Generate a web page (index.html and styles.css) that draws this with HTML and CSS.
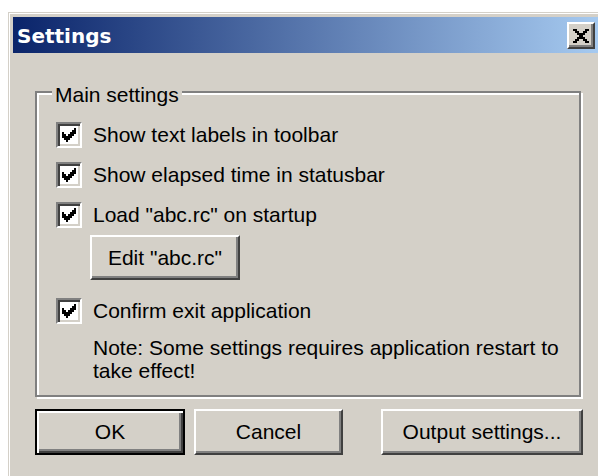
FILE: index.html
```html
<!DOCTYPE html>
<html>
<head>
<meta charset="utf-8">
<title>Settings</title>
<link rel="stylesheet" href="styles.css">
</head>
<body>
<div class="window">
  <div class="titlebar">
    <span class="title">Settings</span>
    <button class="close" aria-label="Close">
      <svg width="16" height="14" viewBox="0 0 8 7" shape-rendering="crispEdges">
        <path d="M0 0h2v1H0z M6 0h2v1H6z M1 1h2v1H1z M5 1h2v1H5z M2 2h4v1H2z M3 3h2v1H3z M2 4h4v1H2z M1 5h2v1H1z M5 5h2v1H5z M0 6h2v1H0z M6 6h2v1H6z" fill="#000"/>
      </svg>
    </button>
  </div>
  <div class="client">
    <div class="group">
      <span class="group-label">Main settings</span>
      <label class="check-row">
        <span class="box"><svg width="14" height="14" viewBox="0 0 7 7" shape-rendering="crispEdges"><path d="M0 2h1v3H0z M1 3h1v3H1z M2 4h1v3H2z M3 3h1v3H3z M4 2h1v3H4z M5 1h1v3H5z M6 0h1v3H6z" fill="#000"/></svg></span>
        <span class="label">Show text labels in toolbar</span>
      </label>
      <label class="check-row">
        <span class="box"><svg width="14" height="14" viewBox="0 0 7 7" shape-rendering="crispEdges"><path d="M0 2h1v3H0z M1 3h1v3H1z M2 4h1v3H2z M3 3h1v3H3z M4 2h1v3H4z M5 1h1v3H5z M6 0h1v3H6z" fill="#000"/></svg></span>
        <span class="label">Show elapsed time in statusbar</span>
      </label>
      <label class="check-row">
        <span class="box"><svg width="14" height="14" viewBox="0 0 7 7" shape-rendering="crispEdges"><path d="M0 2h1v3H0z M1 3h1v3H1z M2 4h1v3H2z M3 3h1v3H3z M4 2h1v3H4z M5 1h1v3H5z M6 0h1v3H6z" fill="#000"/></svg></span>
        <span class="label">Load "abc.rc" on startup</span>
      </label>
      <button class="btn btn-edit">Edit "abc.rc"</button>
      <label class="check-row row-confirm">
        <span class="box"><svg width="14" height="14" viewBox="0 0 7 7" shape-rendering="crispEdges"><path d="M0 2h1v3H0z M1 3h1v3H1z M2 4h1v3H2z M3 3h1v3H3z M4 2h1v3H4z M5 1h1v3H5z M6 0h1v3H6z" fill="#000"/></svg></span>
        <span class="label">Confirm exit application</span>
      </label>
      <p class="note">Note: Some settings requires application restart to<br>take effect!</p>
    </div>
    <div class="actions">
      <button class="btn btn-default btn-ok">OK</button>
      <button class="btn btn-cancel">Cancel</button>
      <button class="btn btn-output">Output settings...</button>
    </div>
  </div>
</div>
</body>
</html>
```
FILE: styles.css
```css
html, body {
  margin: 0;
  padding: 0;
  background: #fff;
  width: 598px;
  height: 476px;
  overflow: hidden;
}

.window {
  margin: 12px 0 0 8px;
  width: 596px;
  height: 480px;
  box-sizing: border-box;
  border: 1px solid #d4d0c8;
  box-shadow: inset 1px 1px 0 #fff;
  padding: 4px;
  background: #d4d0c8;
  font-family: "Liberation Sans", Arial, sans-serif;
  font-size: 21px;
  color: #000;
}

.titlebar {
  height: 36px;
  display: flex;
  align-items: center;
  justify-content: space-between;
  padding: 0 4px;
  background: linear-gradient(90deg, #0a246a 0%, #a6caf0 100%);
}

.title {
  font-family: "DejaVu Sans", Verdana, sans-serif;
  font-weight: bold;
  font-size: 20px;
  color: #fff;
  line-height: 36px;
  padding-top: 2px;
}

.close {
  width: 28px;
  height: 27px;
  margin-top: 1px;
  padding: 0;
  box-sizing: border-box;
  border: 2px solid;
  border-color: #fff #404040 #404040 #fff;
  box-shadow: inset -2px -2px 0 #808080;
  background: #d4d0c8;
  display: flex;
  align-items: center;
  justify-content: center;
}

.client {
  padding-left: 22px;
}

.group {
  position: relative;
  margin-top: 38px;
  width: 546px;
  box-sizing: border-box;
  border: 2px solid #808080;
  box-shadow: inset 2px 2px 0 #fff, 2px 2px 0 #fff;
  padding: 29px 0 13px 19px;
}

.group-label {
  position: absolute;
  top: -10px;
  left: 15px;
  padding: 0 3px;
  line-height: 24px;
  background: #d4d0c8;
}

.check-row {
  display: flex;
  align-items: center;
  gap: 11px;
  height: 26px;
  margin-bottom: 14px;
  line-height: 26px;
}

.box {
  width: 26px;
  height: 26px;
  box-sizing: border-box;
  border: 2px solid;
  border-color: #808080 #fff #fff #808080;
  box-shadow: inset 2px 2px 0 #404040, inset -2px -2px 0 #d4d0c8;
  background: #fff;
  display: flex;
  align-items: center;
  justify-content: center;
}

.btn {
  font-family: "Liberation Sans", Arial, sans-serif;
  font-size: 21px;
  color: #000;
  background: #d4d0c8;
  box-sizing: border-box;
  height: 46px;
  padding: 0;
  border: 2px solid;
  border-color: #fff #404040 #404040 #fff;
  box-shadow: inset -2px -2px 0 #808080;
  display: flex;
  align-items: center;
  justify-content: center;
}

.btn-edit {
  width: 150px;
  height: 45px;
  margin: -7px 0 0 34px;
}

.row-confirm {
  margin-top: 18px;
}

.note {
  margin: -2px 0 0 37px;
  line-height: 23px;
}

.actions {
  display: flex;
  margin-top: 12px;
}

.btn-default {
  border-color: #000;
  box-shadow: inset 2px 2px 0 #fff, inset -2px -2px 0 #404040, inset -4px -4px 0 #808080;
}

.btn-ok {
  width: 150px;
}

.btn-cancel {
  width: 149px;
  margin-left: 9px;
}

.btn-output {
  width: 202px;
  margin-left: 38px;
}
```
